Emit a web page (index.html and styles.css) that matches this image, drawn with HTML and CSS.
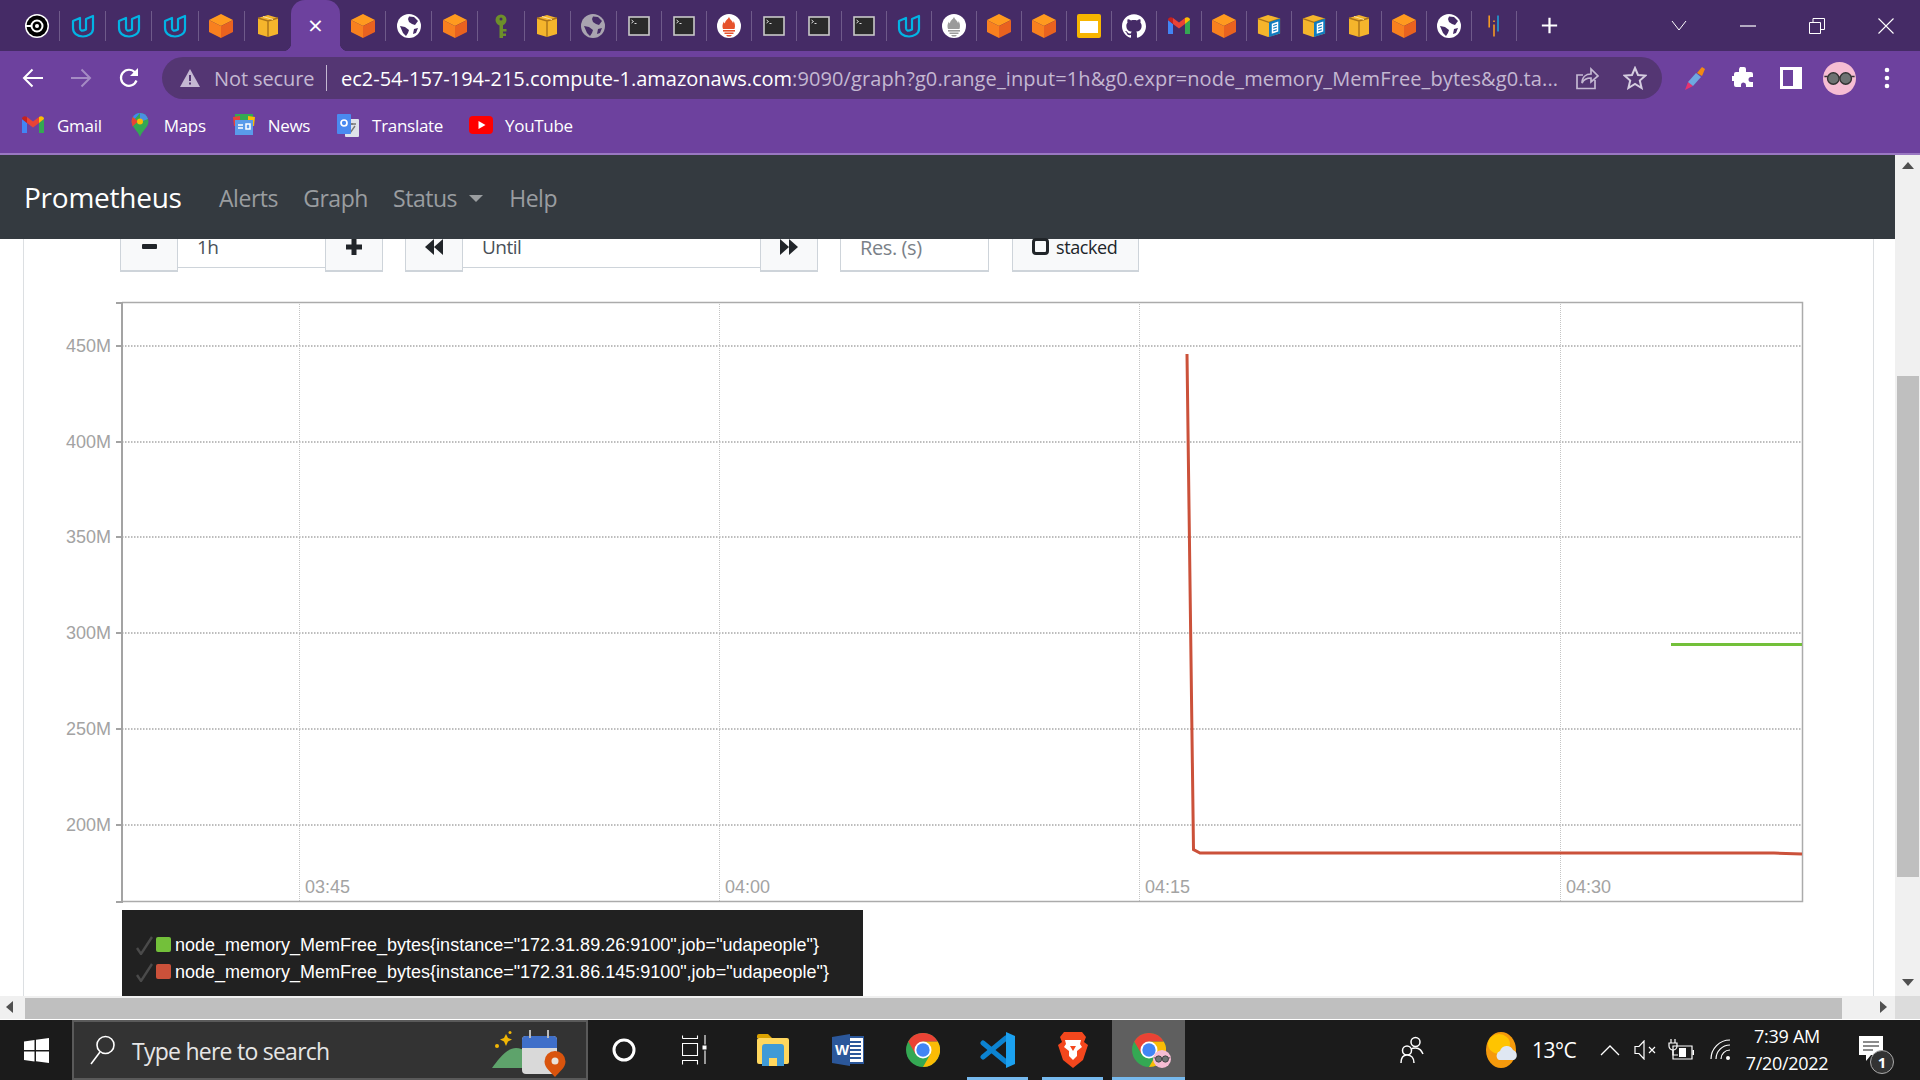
FILE: index.html
```html
<!DOCTYPE html>
<html lang="en">
<head>
<meta charset="utf-8">
<title>Prometheus Time Series Collection and Processing Server</title>
<link rel="stylesheet" href="styles.css">
</head>
<body>
<svg class="defs" aria-hidden="true">
  <symbol id="cube" viewBox="0 0 24 24"><polygon fill="#ff9a1f" points="12,0 24,6 12,12 0,6"/><polygon fill="#f8801f" points="0,6 12,12 12,24 0,18"/><polygon fill="#e9621f" points="24,6 12,12 12,24 24,18"/></symbol>
  <symbol id="box" viewBox="0 0 24 24"><polygon fill="#f5b52c" points="2,4 12,1 22,4 22,20 12,23 2,20"/><path d="M2 4l10 3 10-3M12 7v16" fill="none" stroke="#a9721a" stroke-width="1.4"/><path d="M7 2.5l10 3" stroke="#fbe2a0" stroke-width="1"/></symbol>
  <symbol id="udacity" viewBox="0 0 24 24"><path d="M2 7L9 4V14C9 17 11 17.500 15 15.500V5L22 2V15C22 20 16 22.500 12 22.500C6 22.500 2 19 2 14Z" fill="none" stroke="#02b3e4" stroke-width="2.200" stroke-linejoin="round"/></symbol>
  <symbol id="target" viewBox="0 0 24 24"><circle cx="12" cy="12" r="12" fill="#fff"/><circle cx="12" cy="12" r="10.500" fill="#000"/><circle cx="12" cy="12" r="5.500" fill="none" stroke="#fff" stroke-width="2"/><circle cx="12" cy="12" r="2" fill="#fff"/><rect x="0" y="11" width="6" height="2" fill="#fff"/></symbol>
  <symbol id="globe" viewBox="0 0 24 24"><circle cx="12" cy="12" r="12" fill="currentColor"/><path d="M12 2.500l5 .5 4 4-3 4-3-1-3-2-1-3zM3 12l5 1 4 3-1 3-2 3-3-3zM17 15l4-1-2 5-3 1z" fill="#452b66"/></symbol>
  <symbol id="key" viewBox="0 0 24 24"><circle cx="12" cy="6" r="5.500" fill="#6d8f2a"/><circle cx="12" cy="5" r="1.500" fill="#452b66"/><rect x="10.500" y="10" width="3.500" height="14" fill="#6d8f2a"/><rect x="14" y="15" width="3.500" height="2.500" fill="#6d8f2a"/><rect x="14" y="19.500" width="3" height="2.500" fill="#6d8f2a"/></symbol>
  <symbol id="term" viewBox="0 0 24 24"><rect x="2" y="3" width="20" height="18" fill="#2a2a2a" stroke="#c9c9c9" stroke-width="1.600"/><path d="M4.500 6l2 1.500-2 1.500M7.500 9.500h2" fill="none" stroke="#ddd" stroke-width="1"/></symbol>
  <symbol id="prom" viewBox="0 0 24 24"><circle cx="12" cy="12" r="12" fill="#fff"/><path d="M12 3c1 3 3 3 4 6 .5-.8.5-1.300.5-2 1.500 2 2 5 1 8H6c-1-3-.5-5 1-7.500 0 1 .3 1.500 1 2 0-3 3-4 4-6.500z" fill="currentColor"/><rect x="6" y="16" width="12" height="1.600" fill="currentColor"/><rect x="7.500" y="18.500" width="9" height="1.500" fill="currentColor"/><path d="M9 21h6l-1.500 1.600h-3z" fill="currentColor"/></symbol>
  <symbol id="slides" viewBox="0 0 24 24"><rect width="24" height="24" rx="2" fill="#f7b500"/><rect x="3" y="7" width="18" height="12" fill="#fff"/></symbol>
  <symbol id="github" viewBox="0 0 24 24"><path fill="#fff" d="M12 .297c-6.630 0-12 5.373-12 12 0 5.303 3.438 9.800 8.205 11.385.6.113.82-.258.82-.577 0-.285-.01-1.040-.015-2.040-3.338.724-4.042-1.610-4.042-1.610C4.422 18.070 3.633 17.700 3.633 17.700c-1.087-.744.084-.729.084-.729 1.205.084 1.838 1.236 1.838 1.236 1.070 1.835 2.809 1.305 3.495.998.108-.776.417-1.305.760-1.605-2.665-.3-5.466-1.332-5.466-5.930 0-1.310.465-2.380 1.235-3.220-.135-.303-.54-1.523.105-3.176 0 0 1.005-.322 3.300 1.230.96-.267 1.980-.399 3-.405 1.020.006 2.040.138 3 .405 2.280-1.552 3.285-1.230 3.285-1.230.645 1.653.240 2.873.120 3.176.765.840 1.230 1.910 1.230 3.220 0 4.610-2.805 5.625-5.475 5.920.420.360.810 1.096.810 2.220 0 1.606-.015 2.896-.015 3.286 0 .315.210.690.825.570C20.565 22.092 24 17.592 24 12.297c0-6.627-5.373-12-12-12"/></symbol>
  <symbol id="gmail" viewBox="0 0 24 24"><path fill="#4285f4" d="M1 20h5V10L1 6z"/><path fill="#34a853" d="M18 20h5V6l-5 4z"/><path fill="#ea4335" d="M6 10l6 4.500 6-4.500V4l-6 4.500L6 4z"/><path fill="#c5221f" d="M1 6c0-2.500 3-3.500 5-2v6z"/><path fill="#fbbc04" d="M18 4c2-1.500 5-.5 5 2l-5 4z"/></symbol>
  <symbol id="docbox" viewBox="0 0 26 26"><polygon fill="#f5b52c" points="1,5 12,1 25,5 25,21 12,25 1,21"/><path d="M1 5l12 4 12-4" fill="none" stroke="#a9721a" stroke-width="1.400"/><polygon fill="#0f7cc0" points="13,9 25,5 25,21 13,25"/><polygon fill="#fff" points="16,10.500 23,8 23,19 16,21.500"/><path d="M17.500 12.500l4-1.400M17.500 15.500l4-1.400M17.500 18.500l4-1.400" stroke="#0f7cc0" stroke-width="1.200"/></symbol>
  <symbol id="bars" viewBox="0 0 24 30"><path d="M6 2v15M12 13v15" stroke="#f59a23" stroke-width="2" fill="none"/><path d="M17 2v20" stroke="#1da1d8" stroke-width="2" fill="none"/><path d="M12 8v2" stroke="#f59a23" stroke-width="2"/></symbol>
  <symbol id="chrome" viewBox="0 0 24 24"><circle cx="12" cy="12" r="12" fill="#34a853"/><path fill="#fbbc05" d="M22.400 6A12 12 0 0 1 12 24l5.200-9L12 6z"/><path fill="#ea4335" d="M1.600 6a12 12 0 0 1 20.800 0H12L6.800 15z"/><circle cx="12" cy="12" r="6" fill="#fff"/><circle cx="12" cy="12" r="4.700" fill="#4285f4"/></symbol>
  <symbol id="glasses" viewBox="0 0 24 24"><ellipse cx="12" cy="12" rx="12" ry="12" fill="#f6bdd3"/><circle cx="7.500" cy="12" r="4.200" fill="#6e7272" stroke="#333" stroke-width="1"/><circle cx="16.500" cy="12" r="4.200" fill="#6e7272" stroke="#333" stroke-width="1"/><path d="M11.500 11h1M1 10.500h2.500M20.500 10.500H23" stroke="#333" stroke-width="1"/></symbol>
  <symbol id="tick" viewBox="0 0 17 19"><path d="M1 12l4 6L16 1" fill="none" stroke="#4a4a4a" stroke-width="2.400"/></symbol>
</svg>

<header class="browser">
  <div class="tabstrip">
    <div class="tabs-lead">
      <div class="tab"><svg class="ic"><use href="#target"/></svg></div>
      <div class="tab"><svg class="ic"><use href="#udacity"/></svg></div>
      <div class="tab"><svg class="ic"><use href="#udacity"/></svg></div>
      <div class="tab"><svg class="ic"><use href="#udacity"/></svg></div>
      <div class="tab"><svg class="ic"><use href="#cube"/></svg></div>
      <div class="tab plain"><svg class="ic"><use href="#box"/></svg></div>
    </div>
    <div class="tab-active">×</div>
    <div class="tabs-lead">
      <div class="tab"><svg class="ic"><use href="#cube"/></svg></div>
      <div class="tab"><svg class="ic white"><use href="#globe"/></svg></div>
      <div class="tab"><svg class="ic"><use href="#cube"/></svg></div>
      <div class="tab"><svg class="ic"><use href="#key"/></svg></div>
      <div class="tab"><svg class="ic"><use href="#box"/></svg></div>
      <div class="tab"><svg class="ic gray"><use href="#globe"/></svg></div>
    </div>
    <div class="tab"><svg class="ic"><use href="#term"/></svg></div>
    <div class="tab"><svg class="ic"><use href="#term"/></svg></div>
    <div class="tab"><svg class="ic flame"><use href="#prom"/></svg></div>
    <div class="tab"><svg class="ic"><use href="#term"/></svg></div>
    <div class="tab"><svg class="ic"><use href="#term"/></svg></div>
    <div class="tab"><svg class="ic"><use href="#term"/></svg></div>
    <div class="tab"><svg class="ic"><use href="#udacity"/></svg></div>
    <div class="tab"><svg class="ic ash"><use href="#prom"/></svg></div>
    <div class="tab"><svg class="ic"><use href="#cube"/></svg></div>
    <div class="tab"><svg class="ic"><use href="#cube"/></svg></div>
    <div class="tab"><svg class="ic"><use href="#slides"/></svg></div>
    <div class="tab"><svg class="ic"><use href="#github"/></svg></div>
    <div class="tab"><svg class="ic"><use href="#gmail"/></svg></div>
    <div class="tab"><svg class="ic"><use href="#cube"/></svg></div>
    <div class="tab"><svg class="ic"><use href="#docbox"/></svg></div>
    <div class="tab"><svg class="ic"><use href="#docbox"/></svg></div>
    <div class="tab"><svg class="ic"><use href="#box"/></svg></div>
    <div class="tab"><svg class="ic"><use href="#cube"/></svg></div>
    <div class="tab"><svg class="ic white"><use href="#globe"/></svg></div>
    <div class="tab"><svg class="ic"><use href="#bars"/></svg></div>
    <svg class="newtab" viewBox="0 0 20 20"><path d="M10 1v18M1 10h18" stroke="#fff" stroke-width="2.600"/></svg>
    <div class="winctl">
      <div class="winbtn"><svg width="16" height="12" viewBox="0 0 16 12"><path d="M1 1l7 9 7-9" fill="none" stroke="#fff" stroke-width="1"/></svg></div>
      <div class="winbtn"><svg width="16" height="4" viewBox="0 0 16 4"><path d="M0 2h16" stroke="#fff" stroke-width="1.200"/></svg></div>
      <div class="winbtn"><svg width="16" height="16" viewBox="0 0 16 16"><path d="M.5 4.500h11v11H.5zM4 4.500V.5h11.500v11H11.500" fill="none" stroke="#fff" stroke-width="1"/></svg></div>
      <div class="winbtn"><svg width="16" height="16" viewBox="0 0 16 16"><path d="M.5.5l15 15M15.500.5l-15 15" fill="none" stroke="#fff" stroke-width="1.100"/></svg></div>
    </div>
  </div>

  <div class="toolbar">
    <div class="tbtn"><svg width="22" height="22" viewBox="0 0 22 22"><path d="M21 11H2M10.500 2.500L2 11l8.500 8.500" fill="none" stroke="#fff" stroke-width="2"/></svg></div>
    <div class="tbtn"><svg width="22" height="22" viewBox="0 0 22 22"><path d="M1 11h19M11.500 2.500L20 11l-8.500 8.500" fill="none" stroke="#a58bc4" stroke-width="2"/></svg></div>
    <div class="tbtn"><svg width="22" height="22" viewBox="0 0 22 22"><path d="M18.500 13.500a8 8 0 1 1-1.500-8" fill="none" stroke="#fff" stroke-width="2.200"/><path d="M20 1v8h-8z" fill="#fff"/></svg></div>
    <div class="omnibox">
      <svg class="warn" width="20" height="18" viewBox="0 0 20 18"><path d="M10 0l10 18H0z" fill="#c4b8d2"/><path d="M10 6v6M10 13.500v2" stroke="#543673" stroke-width="2"/></svg>
      <span class="notsecure">Not secure</span>
      <span class="omni-sep"></span>
      <span class="url"><b class="host">ec2-54-157-194-215.compute-1.amazonaws.com</b>:9090/graph?g0.range_input=1h&amp;g0.expr=node_memory_MemFree_bytes&amp;g0.ta...</span>
      <svg class="share" width="24" height="24" viewBox="0 0 24 24"><path d="M20 14v8.500H2V9h6M7 17c0-6 4-9 9-9V3l7 7-7 6v-4c-4 0-7 1-9 5z" fill="none" stroke="#c4b8d2" stroke-width="1.700"/></svg>
      <svg class="star" width="24" height="24" viewBox="0 0 24 24"><path d="M12 2l3 7 7.500.6-5.700 5 1.800 7.400L12 18l-6.600 4 1.800-7.400-5.700-5L9 9z" fill="none" stroke="#d5cde0" stroke-width="2"/></svg>
    </div>
    <div class="exts">
      <div class="tbtn"><svg width="24" height="26" viewBox="0 0 24 26"><path d="M2 25l3-8 5 4z" fill="#e8336f"/><path d="M5 17l8-9 5 4-8 9z" fill="#6ea8e0"/><path d="M14 8l5-6 3 2-3 7z" fill="#f28a12"/></svg></div>
      <div class="tbtn"><svg width="22" height="22" viewBox="0 0 22 22"><path d="M8 0h4a2 2 0 0 1 2 2v3h5a2 2 0 0 1 2 2v3h-2a2.500 2.500 0 0 0 0 5h2v5H14v-2a2.500 2.500 0 0 0-5 0v2H4a2 2 0 0 1-2-2v-4H0v-5h2V7a2 2 0 0 1 2-2h3V2z" fill="#fff"/></svg></div>
      <div class="tbtn"><svg width="22" height="22" viewBox="0 0 22 22"><path d="M1.500 1.500h19v19h-19z" fill="none" stroke="#fff" stroke-width="3"/><rect x="13" y="2" width="7" height="18" fill="#fff"/></svg></div>
      <div class="tbtn"><svg class="avatar"><use href="#glasses"/></svg></div>
      <div class="tbtn"><svg width="6" height="22" viewBox="0 0 6 22"><circle cx="3" cy="3" r="2.300" fill="#fff"/><circle cx="3" cy="11" r="2.300" fill="#fff"/><circle cx="3" cy="19" r="2.300" fill="#fff"/></svg></div>
    </div>
  </div>

  <div class="bookmarks">
    <a class="bm"><svg class="ic"><use href="#gmail"/></svg>Gmail</a>
    <a class="bm"><svg class="ic" viewBox="0 0 24 24"><path d="M12 0a8.500 8.500 0 0 1 8.500 8.500C20.500 14 14 18 12 24 10 18 3.500 14 3.500 8.500A8.500 8.500 0 0 1 12 0z" fill="#34a853"/><path d="M5 4a8.500 8.500 0 0 1 7-4l-7 8z" fill="#4285f4"/><path d="M12 0a8.500 8.500 0 0 1 8 6l-8 3z" fill="#4a90e2"/><path d="M3.500 8.500C3.500 6 5 4 5 4l5 4.500-5.500 5z" fill="#ea4335"/><circle cx="12" cy="8.500" r="3" fill="#fbbc04"/></svg>Maps</a>
    <a class="bm"><svg class="ic" viewBox="0 0 24 24"><rect x="3" y="1" width="18" height="6" fill="#34a853"/><path d="M1 4l7-1v10H2z" fill="#ea4335"/><path d="M23 4l-7-1v10h6z" fill="#fbbc04"/><rect x="3" y="7" width="18" height="15" fill="#5a9bea"/><path d="M6 12h5M6 15h5M14 11h4v5h-4z" stroke="#fff" stroke-width="1.500" fill="none"/></svg>News</a>
    <a class="bm"><svg class="ic" viewBox="0 0 24 24"><rect x="9" y="6" width="14" height="18" rx="1" fill="#dfe3ea"/><path d="M13 11h7M16 10v2M14 20l5-7" stroke="#777" stroke-width="1.400"/><rect x="1" y="1" width="14" height="20" rx="1" fill="#4a8af0"/><circle cx="8" cy="10" r="3" fill="none" stroke="#fff" stroke-width="1.700"/></svg>Translate</a>
    <a class="bm"><svg class="ic" viewBox="0 0 24 24"><rect y="3" width="24" height="18" rx="4" fill="#f00"/><path d="M9.500 8l7 4-7 4z" fill="#fff"/></svg>YouTube</a>
  </div>
</header>

<div class="viewport">
  <div class="pagecol">
    <nav class="navbar">
      <a class="brand">Prometheus</a>
      <a class="navlink">Alerts</a>
      <a class="navlink">Graph</a>
      <a class="navlink status">Status<i class="caret"></i></a>
      <a class="navlink">Help</a>
    </nav>
    <main class="content">
      <div class="controls">
        <button class="btn sq"><svg width="15" height="6" viewBox="0 0 15 6"><rect width="15" height="5" rx="1" fill="#212529"/></svg></button>
        <div class="input range">1h</div>
        <button class="btn sq"><svg width="18" height="18" viewBox="0 0 18 18"><path d="M9 1v16M1 9h16" stroke="#212529" stroke-width="5"/></svg></button>
        <button class="btn sq gap"><svg width="18" height="16" viewBox="0 0 18 16"><path d="M9 0v16L0 8zM18 0v16L9 8z" fill="#212529"/></svg></button>
        <div class="input until">Until</div>
        <button class="btn sq"><svg width="18" height="16" viewBox="0 0 18 16"><path d="M0 0v16l9-8zM9 0v16l9-8z" fill="#212529"/></svg></button>
        <div class="res">Res. (s)</div>
        <button class="btn stacked"><i class="check"></i>stacked</button>
      </div>

      <svg class="chart" viewBox="24 296 1786 610" width="1786" height="610">
        <g class="grid-h">
          <path d="M122 346H1802M122 442H1802M122 537H1802M122 633H1802M122 729H1802M122 825H1802"/>
        </g>
        <g class="grid-v">
          <path d="M299.500 302V902M719.500 302V902M1139.500 302V902M1560.500 302V902"/>
        </g>
        <path class="frame" d="M122 302.500H1802.500V901.500H122"/>
        <path class="axis" d="M116 303H122V902H116M116 346H122M116 442H122M116 537H122M116 633H122M116 729H122M116 825H122"/>
        <g class="ylabels">
          <text x="111" y="352">450M</text>
          <text x="111" y="448">400M</text>
          <text x="111" y="543">350M</text>
          <text x="111" y="639">300M</text>
          <text x="111" y="735">250M</text>
          <text x="111" y="831">200M</text>
        </g>
        <g class="xlabels">
          <text x="305" y="893">03:45</text>
          <text x="725" y="893">04:00</text>
          <text x="1145" y="893">04:15</text>
          <text x="1566" y="893">04:30</text>
        </g>
        <path class="series red" d="M1187 354L1193.500 849.500L1200 853H1774L1802 854"/>
        <path class="series green" d="M1671 644.500H1802"/>
      </svg>

      <div class="legend">
        <div class="legend-row"><svg class="tick"><use href="#tick"/></svg><i class="swatch sw-green"></i>node_memory_MemFree_bytes{instance="172.31.89.26:9100",job="udapeople"}</div>
        <div class="legend-row"><svg class="tick"><use href="#tick"/></svg><i class="swatch sw-red"></i>node_memory_MemFree_bytes{instance="172.31.86.145:9100",job="udapeople"}</div>
      </div>
    </main>
  </div>
  <aside class="vscroll">
    <i class="arr-up"></i>
    <div class="vthumb"></div>
    <i class="arr-down"></i>
  </aside>
</div>

<div class="hscroll">
  <i class="arr-left"></i>
  <div class="hthumb"></div>
  <i class="arr-right"></i>
  <div class="corner"></div>
</div>

<footer class="taskbar">
  <div class="start"><svg width="25" height="25" viewBox="0 0 25 25"><path d="M0 3.500l10.500-1.500v10H0zM12 1.800L25 0v12H12zM0 13.500h10.500v10L0 22zM12 13.500h13V25l-13-1.800z" fill="#fff"/></svg></div>
  <div class="search">
    <svg width="26" height="32" viewBox="0 0 26 32"><circle cx="15.500" cy="11" r="8.500" fill="none" stroke="#fff" stroke-width="1.600"/><path d="M10 18L1 30" stroke="#fff" stroke-width="1.600"/></svg>
    <span class="search-text">Type here to search</span>
    <svg class="search-art" width="74" height="48" viewBox="0 0 74 48"><path d="M14 4l2 4 4 1.500-4 2-2 4.500-2-4.500-4-2 4-1.500z" fill="#f2b705"/><circle cx="18" cy="2.500" r="1.500" fill="#f2b705"/><circle cx="5" cy="16" r="2" fill="#f2b705"/><path d="M0 38c6-8 14-20 24-20 8 0 12 6 14 8v12z" fill="#5ea36b"/><rect x="30" y="6" width="35" height="38" rx="4" fill="#d9d9d9"/><path d="M30 10a4 4 0 0 1 4-4h27a4 4 0 0 1 4 4v8H30z" fill="#3f6fc9"/><path d="M38 0v8M56 0v8" stroke="#bbb" stroke-width="2"/><path d="M64 24a10.500 10.500 0 0 1 10.500 10.500C74.500 41 68 45 64 50c-4-5-10.500-9-10.500-15.500A10.500 10.500 0 0 1 64 24z" transform="translate(-1 -3)" fill="#d9540d"/><circle cx="63" cy="31" r="3.500" fill="#e9e2da"/></svg>
  </div>
  <div class="cortana"><svg width="24" height="24" viewBox="0 0 24 24"><circle cx="12" cy="12" r="10" fill="none" stroke="#fff" stroke-width="3"/></svg></div>
  <div class="taskview"><svg width="26" height="30" viewBox="0 0 26 30"><path d="M.5 3.500h15V.5M.5 3.500V.5M.5 8.500h15v12H.5zM.5 29.500v-4h15v4M23 0v29" fill="none" stroke="#fff" stroke-width="1.100"/><rect x="20" y="10" width="5" height="5" fill="#fff" stroke="#1b1b1b"/></svg></div>
  <div class="task"><svg width="32" height="32" viewBox="0 0 32 32"><path d="M0 2a2 2 0 0 1 2-2h9l4 4h-15z" fill="#dba200"/><rect y="4" width="32" height="26" rx="2" fill="#ffd75e"/><path d="M5 13a3 3 0 0 1 3-3h16a3 3 0 0 1 3 3v19H20v-8h-8v8H5z" fill="#3f9ad6"/><rect x="12" y="24" width="8" height="8" fill="#ffd75e"/></svg></div>
  <div class="task"><svg width="32" height="32" viewBox="0 0 32 32"><rect x="12" y="3" width="20" height="26" fill="#fff" stroke="#2b579a" stroke-width="2"/><path d="M18 8h11M18 12h11M18 16h11M18 20h11M18 24h11" stroke="#2b579a" stroke-width="2"/><path d="M0 3l18-3v32L0 29z" fill="#2b579a"/><text class="wordw" x="3" y="21">W</text></svg></div>
  <div class="task"><svg width="34" height="34"><use href="#chrome"/></svg></div>
  <div class="task running"><svg width="36" height="36" viewBox="0 0 36 36"><path d="M3 11l23 19M3 25L26 6" stroke="#0c83d1" stroke-width="5" fill="none" stroke-linecap="round"/><path d="M26 0l9 4v28l-9 4z" fill="#1ba1f0"/></svg></div>
  <div class="task running"><svg width="32" height="36" viewBox="0 0 32 36"><path d="M7 0h18l4 5-2 5 4 3-5 15-10 8-10-8L1 13l4-3-2-5z" fill="#f4471d"/><path d="M8 8h16l-1 4 2 3-5 4v5l-4 4-4-4v-5l-5-4 2-3z" fill="#fff"/><path d="M13 14h6l-3 5z" fill="#f4471d"/></svg></div>
  <div class="task active"><svg width="34" height="34"><use href="#chrome"/></svg><svg class="avatar-mini"><use href="#glasses"/></svg></div>
  <div class="tray">
    <svg class="t-people" width="24" height="28" viewBox="0 0 24 28"><circle cx="15.500" cy="6" r="4.500" fill="none" stroke="#fff" stroke-width="1.500"/><path d="M8 17c1-3 3-5 7.500-5s6 3 7.500 6" fill="none" stroke="#fff" stroke-width="1.500"/><circle cx="7" cy="14.500" r="4.500" fill="#1b1b1b" stroke="#fff" stroke-width="1.500"/><path d="M1 27c0-5 2-8 6-8s7 3 7 8" fill="#1b1b1b" stroke="#fff" stroke-width="1.500"/></svg>
    <svg class="t-weather" width="34" height="36" viewBox="0 0 34 36"><ellipse cx="15" cy="18" rx="15" ry="18" fill="#f59a0c"/><ellipse cx="13" cy="12" rx="11" ry="10" fill="#ffc400"/><path d="M13 28a5 5 0 0 1 1-9 7 7 0 0 1 13-1 5.500 5.500 0 0 1 1 10z" fill="#dfe7f2"/></svg>
    <span class="t-temp">13°C</span>
    <svg class="t-chev" width="20" height="12" viewBox="0 0 20 12"><path d="M1 11l9-9 9 9" fill="none" stroke="#fff" stroke-width="1.300"/></svg>
    <svg class="t-vol" width="24" height="20" viewBox="0 0 24 20"><path d="M1 6.500h4L10 1v18l-5-5.500H1z" fill="none" stroke="#fff" stroke-width="1.200"/><path d="M15 7l6 6M21 7l-6 6" stroke="#fff" stroke-width="1.200"/></svg>
    <svg class="t-bat" width="26" height="22" viewBox="0 0 26 22"><path d="M5 7h19v13H5z" fill="none" stroke="#fff" stroke-width="1.200"/><path d="M24.500 11h1.500v5h-1.500" fill="#fff"/><rect x="11" y="9" width="7" height="9" fill="#fff"/><path d="M3 0v4M7 0v4M1 4h8v3a4 4 0 0 1-8 0zM5 11v5h5" fill="none" stroke="#fff" stroke-width="1.200"/></svg>
    <svg class="t-wifi" width="22" height="22" viewBox="0 0 22 22"><path d="M1 20A19 19 0 0 1 20 1M6 20A14 14 0 0 1 20 6M11 20a9 9 0 0 1 9-9" fill="none" stroke="#fff" stroke-width="1.200"/><circle cx="18" cy="19" r="2" fill="#fff"/></svg>
    <div class="clock"><span>7:39 AM</span><span>7/20/2022</span></div>
    <div class="notif"><svg width="24" height="28" viewBox="0 0 24 28"><path d="M0 0h24v19H12l-5 6v-6H0z" fill="#fff"/><path d="M4 6h16M4 10h16M4 14h10" stroke="#1b1b1b" stroke-width="1.200"/></svg><span class="badge">1</span></div>
  </div>
</footer>
</body>
</html>
```
FILE: styles.css
```css
* { box-sizing: border-box; }
html, body { margin: 0; height: 100%; }
body { width: 1920px; height: 1080px; overflow: hidden; display: flex; flex-direction: column; font-family: "Open Sans", "Liberation Sans", sans-serif; background: #fff; }
.defs { position: absolute; width: 0; height: 0; }
a { color: inherit; text-decoration: none; }
b { font-weight: 400; }

/* browser chrome */
.browser { background: #6d419e; border-bottom: 2px solid #9a78c2; height: 155px; flex: none; }
.tabstrip { height: 51px; background: #452b66; display: flex; align-items: center; padding-left: 14px; }
.tabs-lead { display: flex; align-items: center; }
.tabs-lead .tab { width: 46.17px; }
.tab { width: 45px; height: 30px; flex: none; display: flex; align-items: center; justify-content: center; border-right: 1px solid #6f5a8a; }
.tab.plain { border-right: 0; }
.ic { width: 24px; height: 24px; flex: none; }
.ic.white { color: #fff; }
.ic.gray { color: #a9a4b0; }
.ic.flame { color: #e6522c; }
.ic.ash { color: #9b9b9b; }
.tab-active { width: 49px; height: 51px; flex: none; position: relative; background: #6d419e; border-radius: 14px 14px 0 0; color: #fff; font-size: 26px; line-height: 51px; text-align: center; }
.tab-active::before, .tab-active::after { content: ""; position: absolute; bottom: 0; width: 8px; height: 8px; }
.tab-active::before { left: -8px; background: radial-gradient(circle at 0 0, transparent 8px, #6d419e 8.500px); }
.tab-active::after { right: -8px; background: radial-gradient(circle at 100% 0, transparent 8px, #6d419e 8.500px); }
.newtab { width: 17px; height: 17px; margin-left: 24px; flex: none; }
.winctl { display: flex; margin-left: auto; align-self: flex-start; }
.winbtn { width: 68.750px; height: 52px; display: flex; align-items: center; justify-content: center; }

.toolbar { height: 54px; display: flex; align-items: flex-start; padding: 6px 0 0 9px; }
.tbtn { width: 48px; height: 42px; flex: none; display: flex; align-items: center; justify-content: center; }
.omnibox { width: 1500px; height: 42px; margin-left: 9px; flex: none; background: #543673; border-radius: 21px; display: flex; align-items: center; padding: 0 15px 0 18px; color: #c4b8d2; font-size: 20px; white-space: nowrap; }
.notsecure { margin-left: 14px; width: 99px; letter-spacing: -.1px; }
.omni-sep { width: 1px; height: 26px; background: #c4b8d2; margin: 0 14px 0 13px; flex: none; }
.url { flex: 1; overflow: hidden; color: #c4b8d2; letter-spacing: .1px; }
.host { color: #fff; letter-spacing: 0; }
.share { margin-left: 18px; flex: none; }
.star { margin-left: 24px; flex: none; }
.exts { display: flex; margin-left: 9px; }
.avatar { width: 33px; height: 33px; }

.bookmarks { height: 48px; display: flex; align-items: center; padding: 0 0 8px 21px; color: #fff; font-size: 17px; }
.bm { display: flex; align-items: center; gap: 12px; margin-right: 26px; letter-spacing: -.3px; }

/* page */
.viewport { height: 841px; flex: none; display: flex; }
.pagecol { width: 1895px; flex: none; display: flex; flex-direction: column; }
.navbar { height: 84px; flex: none; background: #343a40; display: flex; align-items: center; padding: 0 0 0 24px; font-size: 23px; color: #9a9da0; }
.brand { color: #fff; font-size: 28px; width: 195px; letter-spacing: -.25px; }
.navlink { margin: 2px 25px 0 0; letter-spacing: -.45px; }
.status { display: flex; align-items: center; margin-right: 26px; }
.caret { width: 0; height: 0; margin-left: 12px; border: 7px solid transparent; border-top: 7px solid #9a9da0; border-bottom: 0; }

.content { flex: 1; min-height: 0; margin-left: 23px; margin-right: 21px; border: solid #dcdfe2; border-width: 0 1px; }
.controls { display: flex; align-items: flex-start; padding-left: 96px; font-size: 19px; color: #495057; height: 33px; }
.btn { height: 33px; background: #f8f9fa; border: 1px solid #ced4da; border-top: 0; border-bottom-width: 2px; font: inherit; color: #212529; padding: 0 0 16px; display: flex; align-items: center; justify-content: center; flex: none; }
.sq { width: 58px; }
.gap { margin-left: 22px; }
.input { height: 29px; border-bottom: 1px solid #ced4da; padding-left: 19px; line-height: 17px; flex: none; letter-spacing: -.5px; }
.range { width: 147px; }
.until { width: 297px; }
.res { width: 149px; height: 33px; margin-left: 22px; border: 1px solid #ced4da; border-top: 0; border-bottom-width: 2px; padding-left: 19px; font-size: 20px; line-height: 18px; color: #7a8188; letter-spacing: -.4px; }
.stacked { width: 127px; margin-left: 23px; letter-spacing: -.4px; justify-content: flex-start; padding-left: 19px; font-size: 18px; }
.check { width: 17px; height: 17px; border: 3px solid #212529; border-radius: 4px; margin-right: 7px; flex: none; }

.chart { display: block; margin-top: 24px; font-family: "Liberation Sans", Arial, sans-serif; font-size: 18px; fill: #a3a3a3; }
.grid-h path { fill: none; stroke: #bdbdbd; stroke-width: 2; stroke-dasharray: 1.500 1.500; }
.grid-v path { fill: none; stroke: #c4c4c4; stroke-width: 1; stroke-dasharray: 1 1; shape-rendering: crispEdges; }
.frame { fill: none; stroke: #ababab; stroke-width: 1.500; }
.axis { fill: none; stroke: #a3a3a3; stroke-width: 2; }
.ylabels text { text-anchor: end; }
.series { fill: none; stroke-width: 3; }
.red { stroke: #cb513a; }
.green { stroke: #73c03a; }

.legend { width: 741px; height: 86px; margin: 4px 0 0 98px; background: #212121; color: #fff; font-family: "Liberation Sans", Arial, sans-serif; font-size: 18px; padding-top: 22px; }
.legend-row { height: 27px; line-height: 27px; display: flex; align-items: center; white-space: nowrap; padding-left: 14px; }
.tick { width: 17px; height: 19px; margin-right: 3px; flex: none; }
.swatch { width: 15px; height: 15px; border-radius: 2px; margin: -3px 4px 0 0; flex: none; }
.sw-green { background: #73c03a; }
.sw-red { background: #cb513a; }

/* scrollbars */
.vscroll { width: 25px; flex: none; background: #f0f0f0; display: flex; flex-direction: column; align-items: center; position: relative; }
.vthumb { width: 22px; height: 501px; background: #bfbfbf; margin-top: 221px; }
.arr-up, .arr-down, .arr-left, .arr-right { position: absolute; width: 0; height: 0; border: 6px solid transparent; }
.arr-up { top: 7px; border-bottom: 7px solid #505050; border-top: 0; }
.arr-down { bottom: 10px; border-top: 7px solid #505050; border-bottom: 0; }
.hscroll { height: 24px; flex: none; background: #f0f0f0; border-bottom: 1px solid #fff; position: relative; padding: 2px 0 0 25px; display: flex; }
.hthumb { width: 1817px; height: 21px; background: #bfbfbf; }
.arr-left { left: 6px; top: 5px; border-right: 7px solid #505050; border-left: 0; }
.arr-right { left: 1880px; top: 5px; border-left: 7px solid #505050; border-right: 0; }
.corner { width: 25px; height: 23px; margin: -2px 0 0 53px; background: #dcdcdc; }

/* taskbar */
.taskbar { height: 60px; flex: none; background: #1b1b1b; display: flex; align-items: center; color: #fff; }
.start { width: 72px; display: flex; justify-content: center; }
.search { width: 516px; height: 60px; background: #333; border: 2px solid #5a5a5a; display: flex; align-items: center; padding-left: 16px; color: #e6e6e6; font-size: 23px; position: relative; }
.search-text { margin: 2px 0 0 16px; letter-spacing: -.75px; }
.search-art { position: absolute; left: 418px; top: 8px; }
.cortana { width: 72px; display: flex; justify-content: center; }
.taskview { width: 75px; display: flex; justify-content: center; padding-right: 5px; }
.task { width: 75px; height: 60px; flex: none; display: flex; align-items: center; justify-content: center; position: relative; }
.running::after, .active::after { content: ""; position: absolute; left: 7px; right: 7px; bottom: 0; height: 3px; background: #76b9ed; }
.task.active { background: #5f5f5f; width: 73px; margin-left: 2px; }
.active::after { left: 0; right: 0; }
.avatar-mini { position: absolute; left: 41px; top: 30px; width: 18px; height: 18px; }
.tray { display: flex; align-items: center; height: 60px; flex: none; position: relative; width: 735px; }
.t-people { margin-left: 215px; flex: none; }
.t-weather { margin-left: 62px; flex: none; }
.t-temp { margin-left: 12px; width: 52px; font-size: 21px; letter-spacing: -.5px; flex: none; }
.t-chev { margin-left: 16px; flex: none; }
.t-vol { margin-left: 14px; flex: none; }
.t-bat { margin-left: 10px; flex: none; }
.t-wifi { margin-left: 16px; flex: none; }
.clock { margin-left: 4px; width: 102px; display: flex; flex-direction: column; align-items: center; gap: 3px; font-size: 18px; line-height: 24px; letter-spacing: -.3px; flex: none; margin-top: -2px; }
.notif { margin-left: 21px; position: relative; display: flex; flex: none; }
.badge { position: absolute; left: 11px; top: 14px; width: 24px; height: 24px; border-radius: 50%; background: #333; border: 1px solid #aaa; font-size: 15px; font-weight: 700; line-height: 22px; text-align: center; }
.wordw { font-family: "Liberation Sans", sans-serif; font-size: 15px; font-weight: 700; fill: #fff; }
```
